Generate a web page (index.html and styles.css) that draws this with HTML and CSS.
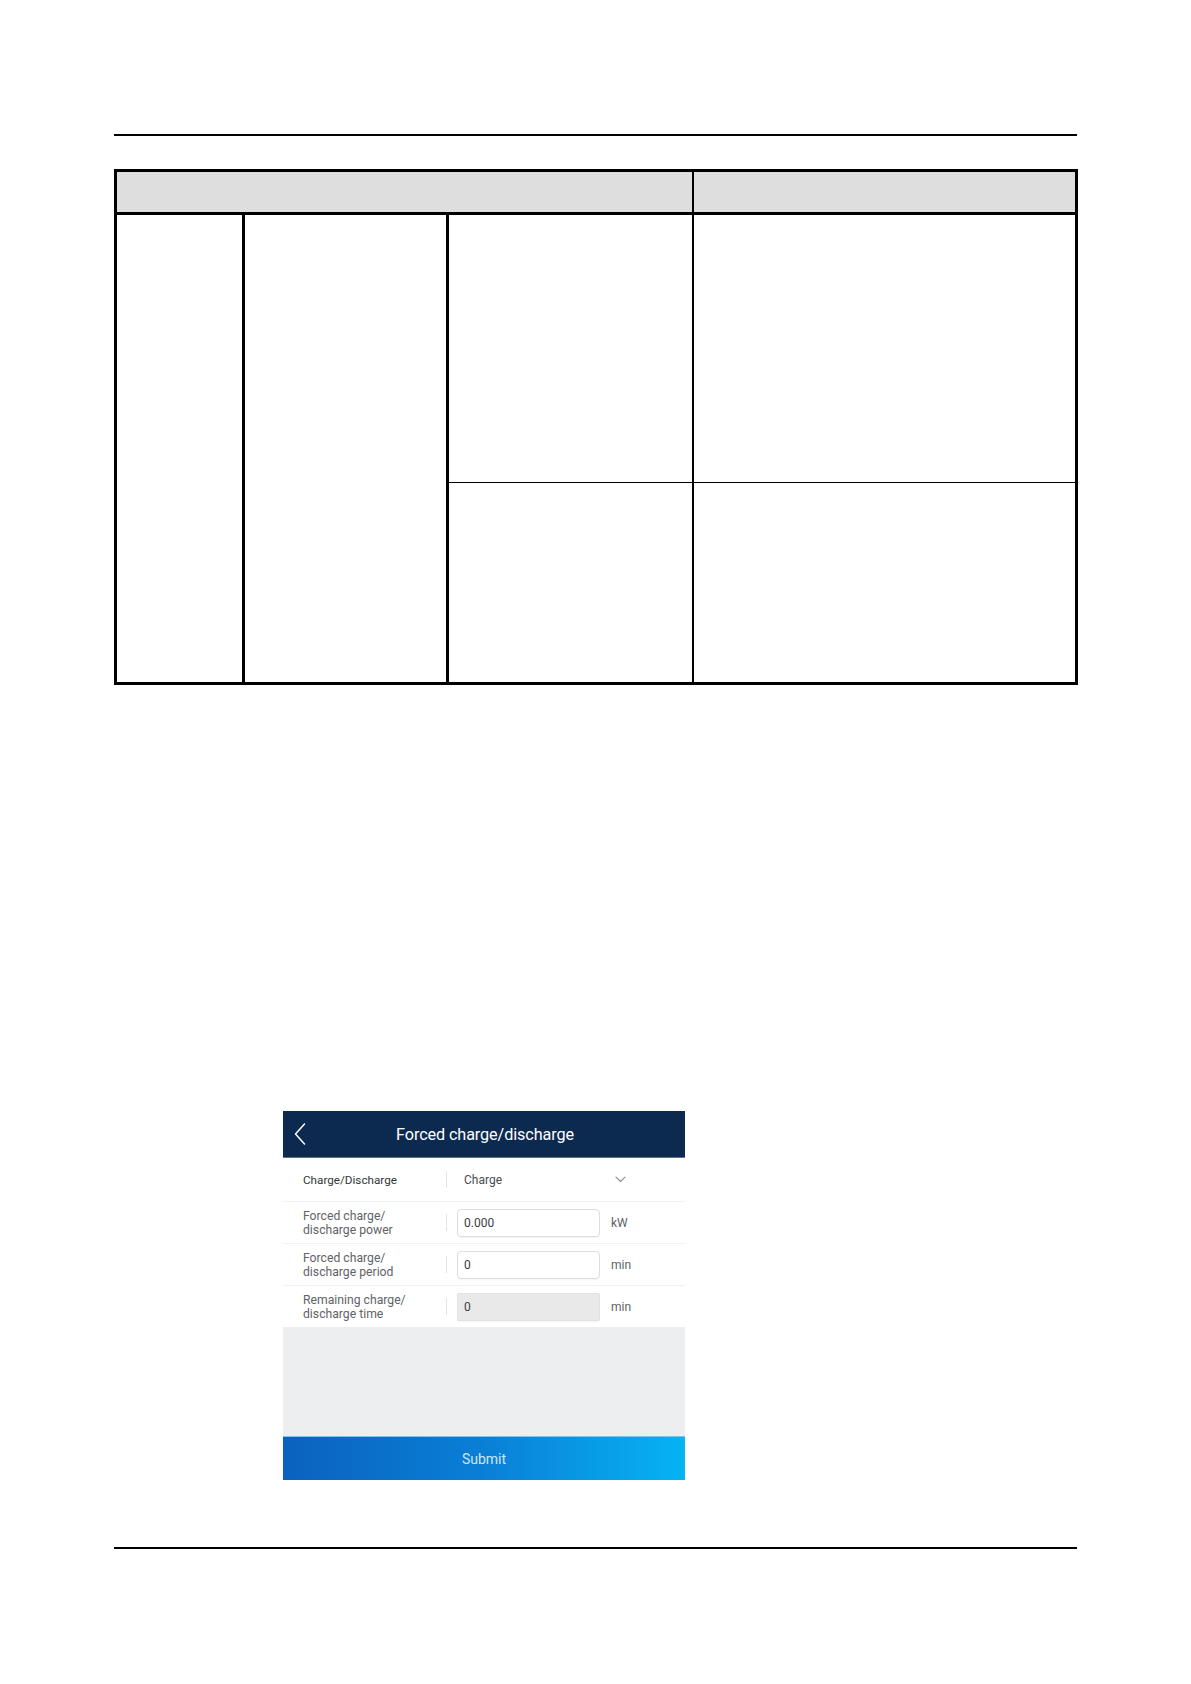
FILE: index.html
```html
<!DOCTYPE html>
<html lang="en">
<head>
<meta charset="utf-8">
<title>Forced charge/discharge</title>
<link rel="stylesheet" href="styles.css">
</head>
<body>
<div class="page">
  <div class="rule rule-top"></div>

  <table class="spec">
    <colgroup>
      <col class="c1"><col class="c2"><col class="c3"><col class="c4">
    </colgroup>
    <thead>
      <tr class="head-row">
        <th colspan="3" class="h-left"></th>
        <th class="h-right"></th>
      </tr>
    </thead>
    <tbody>
      <tr class="row-a">
        <td rowspan="2" class="b1"></td>
        <td rowspan="2" class="b2"></td>
        <td class="b3 mid"></td>
        <td class="b4 mid"></td>
      </tr>
      <tr class="row-b">
        <td class="b3"></td>
        <td class="b4"></td>
      </tr>
    </tbody>
  </table>

  <div class="phone">
    <div class="nav">
      <svg class="back" width="14" height="24" viewBox="0 0 14 24"><path d="M11.5 2 L2.5 12 L11.5 22" fill="none" stroke="#ffffff" stroke-width="1.5" stroke-linecap="round" stroke-linejoin="round"/></svg>
      <div class="nav-title">Forced charge/discharge</div>
    </div>
    <div class="form">
      <div class="frow frow-first">
        <div class="flabel dark">Charge/Discharge</div>
        <div class="fdiv"></div>
        <div class="fselect">Charge</div>
        <svg class="chev" width="11" height="7" viewBox="0 0 11 7"><path d="M1 1.2 L5.5 5.5 L10 1.2" fill="none" stroke="#8a8f96" stroke-width="1.1" stroke-linecap="round" stroke-linejoin="round"/></svg>
      </div>
      <div class="frow">
        <div class="flabel">Forced charge/<br>discharge power</div>
        <div class="fdiv"></div>
        <div class="finput">0.000</div>
        <div class="funit">kW</div>
      </div>
      <div class="frow">
        <div class="flabel">Forced charge/<br>discharge period</div>
        <div class="fdiv"></div>
        <div class="finput">0</div>
        <div class="funit">min</div>
      </div>
      <div class="frow frow-last">
        <div class="flabel">Remaining charge/<br>discharge time</div>
        <div class="fdiv"></div>
        <div class="finput disabled">0</div>
        <div class="funit">min</div>
      </div>
    </div>
    <div class="blank"></div>
    <div class="submit">Submit</div>
  </div>

  <div class="rule rule-bottom"></div>
</div>
</body>
</html>
```

FILE: styles.css
```css
html, body {
  margin: 0;
  padding: 0;
  background: #ffffff;
}

body {
  font-family: Roboto, "Liberation Sans", Arial, sans-serif;
  width: 1191px;
  height: 1684px;
  overflow: hidden;
}

.page {
  width: 963px;
  margin-left: 114px;
  padding-top: 134px;
  display: flex;
  flex-direction: column;
}

.rule {
  height: 2px;
  background: #000000;
  width: 963px;
}

/* table */
.spec {
  margin-top: 33px;
  width: 961px;
  border-collapse: collapse;
  table-layout: fixed;
  border: 3px solid #000;
}

.c1 { width: 128px; }
.c2 { width: 204px; }
.c3 { width: 245px; }
.c4 { width: 384px; }

.spec th, .spec td {
  padding: 0;
}

.head-row th {
  height: 40px;
  background: #dedede;
  border-bottom: 3px solid #000;
}

.h-left {
  border-right: 2px solid #000;
}

.b1 { border-right: 3px solid #000; }
.b2 { border-right: 3px solid #000; }
.b3 { border-right: 2px solid #000; }

.row-a td.mid {
  border-bottom: 1.5px solid #000;
}

.row-a { height: 269px; }
.row-b { height: 201px; }

/* phone screenshot */
.phone {
  margin-top: 426px;
  margin-left: 169px;
  width: 402px;
  display: flex;
  flex-direction: column;
  background: #ffffff;
}

.nav {
  height: 46px;
  background: #0c2a4f;
  border-bottom: 1px solid #5d7391;
  display: flex;
  align-items: center;
  justify-content: center;
  position: relative;
}

.back {
  position: absolute;
  left: 10px;
  top: 11px;
}

.nav-title {
  color: #ffffff;
  font-size: 16.2px;
  letter-spacing: -0.1px;
  margin-left: 2px;
}

.form {
  display: flex;
  flex-direction: column;
}

.frow {
  height: 41px;
  border-bottom: 1px solid #f1f2f3;
  display: flex;
  align-items: center;
  padding-left: 20px;
}

.frow-first { height: 43px; }
.frow-last { border-bottom: none; }

.flabel {
  width: 143px;
  font-size: 12.2px;
  line-height: 14px;
  color: #5f6368;
}

.flabel.dark {
  font-size: 11.7px;
  color: #333638;
}

.fdiv {
  width: 1px;
  height: 17px;
  background: #e3e4e6;
}

.fselect {
  margin-left: 17px;
  width: 137px;
  font-size: 12px;
  color: #4a4d52;
}

.chev {
  margin-left: 14px;
}

.finput {
  margin-left: 10px;
  width: 135px;
  height: 26px;
  border: 1px solid #dcdddf;
  border-radius: 4px;
  padding-left: 6px;
  font-size: 12px;
  color: #3a3c40;
  display: flex;
  align-items: center;
  background: #ffffff;
  box-shadow: 0 1px 1px rgba(0,0,0,0.04);
}

.finput.disabled {
  background: #e9e9ea;
  border-color: #e1e2e3;
  border-radius: 2px;
}

.funit {
  margin-left: 11px;
  font-size: 12px;
  color: #5c5f64;
}

.blank {
  height: 109px;
  background: #eceef0;
}

.submit {
  height: 43px;
  background: linear-gradient(90deg, #0a62be 0%, #0a7fd6 50%, #06b3f3 100%);
  color: #cfe6fb;
  font-size: 14px;
  display: flex;
  align-items: center;
  justify-content: center;
  border-top: 1px solid #7fc4ea;
}

.rule-bottom {
  margin-top: 67px;
}
```
